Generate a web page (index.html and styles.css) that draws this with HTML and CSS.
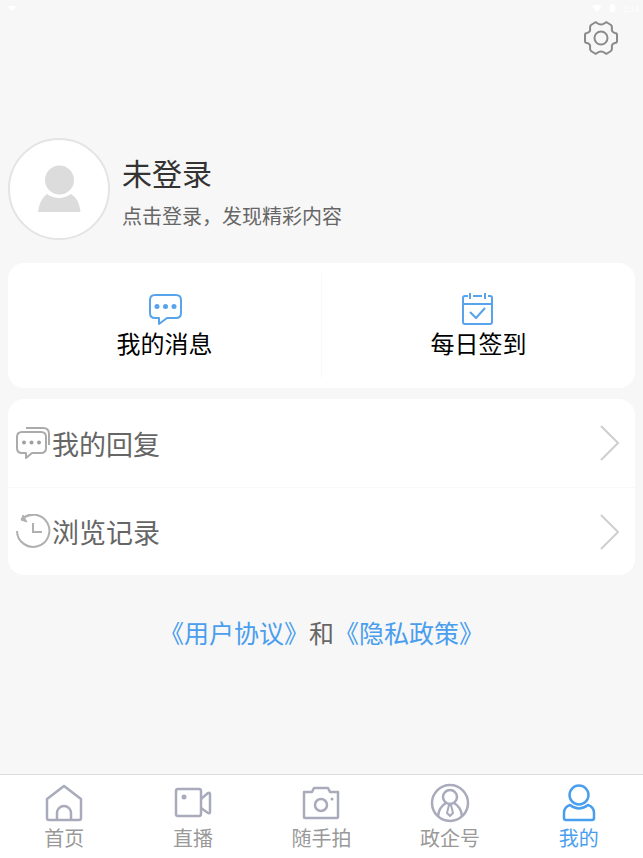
FILE: index.html
```html
<!DOCTYPE html>
<html lang="zh-CN">
<head>
  <meta charset="UTF-8" />
  <meta name="viewport" content="width=device-width, initial-scale=1.0" />
  <title>我的</title>
  <link rel="stylesheet" href="styles.css">
</head>
<body>
  <div class="status-bar">
    <svg width="8" height="6" viewBox="0 0 8 6"><path d="M0 1h8l-2 4H2z" fill="currentColor"/></svg>
    <div class="status-right">
      <svg width="10" height="8" viewBox="0 0 10 8"><path d="M0 2Q5-1 10 2L5 8z" fill="currentColor"/></svg>
      <svg width="5" height="8" viewBox="0 0 5 8"><path d="M0 1h1V0h3v1h1v7H0z" fill="currentColor"/></svg>
      <span>1:34</span>
    </div>
  </div>

  <header class="top-bar">
    <button class="settings" type="button" aria-label="设置">
      <svg width="36" height="36" viewBox="0 0 36 36" fill="none" stroke="#8a8a8a" stroke-width="2" stroke-linejoin="round">
        <path d="M12 2.500Q13 2 14 3Q18 6 22 3Q23 2 24 2.500L28 5Q29 6 29 8Q28 12 32 13Q34 13 34 15V21Q34 23 32 23Q28 24 29 28Q29 30 28 31L24 33.500Q23 34 22 33Q18 30 14 33Q13 34 12 33.500L8 31Q7 30 7 28Q8 24 4 23Q2 23 2 21V15Q2 13 4 13Q8 12 7 8Q7 6 8 5z"/>
        <circle cx="18" cy="18" r="6.500"/>
      </svg>
    </button>
  </header>

  <main>
    <a class="profile" href="#login">
      <span class="avatar">
        <svg width="44" height="48" viewBox="0 0 44 48" fill="#dcdcdc">
          <circle cx="22.500" cy="15" r="14.500"/>
          <path d="M10 29Q22 37 34 29Q42 34 43.500 46Q43.500 47 42 47H2Q1 47 1 46Q3 34 10 29z"/>
        </svg>
      </span>
      <span class="profile-text">
        <strong>未登录</strong>
        <span class="hint">点击登录，发现精彩内容</span>
      </span>
    </a>

    <section class="card shortcuts">
      <a href="#messages">
        <svg width="36" height="34" viewBox="0 0 36 34" fill="none" stroke="#57a3ec" stroke-width="2" stroke-linejoin="round">
          <path d="M8 3H29Q34 3 34 8V21Q34 26 29 26H20L12 32V26H8Q3 26 3 21V8Q3 3 8 3z"/>
          <g fill="#57a3ec" stroke="none"><circle cx="10" cy="14.500" r="2.500"/><circle cx="18.500" cy="14.500" r="2.500"/><circle cx="27" cy="14.500" r="2.500"/></g>
        </svg>
        <span>我的消息</span>
      </a>
      <a href="#signin">
        <svg width="36" height="34" viewBox="0 0 36 34" fill="none" stroke="#57a3ec" stroke-width="2" stroke-linejoin="round">
          <path d="M7 4H4Q2 4 2 6V30Q2 32 4 32H29Q31 32 31 30V6Q31 4 29 4H27M12 4H21M9 1V7M24 1V7M2 12H31M9 20L15 26L24 16"/>
        </svg>
        <span>每日签到</span>
      </a>
    </section>

    <nav class="card menu">
      <a href="#replies">
        <svg width="36" height="36" viewBox="0 0 36 36" fill="none" stroke="#ababab" stroke-width="2" stroke-linejoin="round">
          <path d="M6 7H25Q30 7 30 12V23Q30 28 25 28H16L10 33V28H6Q1 28 1 23V12Q1 7 6 7zM10 3H27Q33 3 33 9V20"/>
          <g fill="#a0a0a0" stroke="none"><circle cx="8" cy="17.500" r="2"/><circle cx="15.500" cy="17.500" r="2"/><circle cx="23" cy="17.500" r="2"/></g>
        </svg>
        <span>我的回复</span>
        <svg class="arrow" width="20" height="36" viewBox="0 0 20 36" fill="none" stroke="#cfcfcf" stroke-width="2"><path d="M2 1L19 18L2 35"/></svg>
      </a>
      <a href="#history">
        <svg width="36" height="36" viewBox="0 0 36 36" fill="none" stroke="#b0b0b0" stroke-width="2">
          <path d="M1 17A16.200 16.200 0 1 0 6 5M6 5Q11 1 17 1M17 9V18H26"/>
          <path d="M7 1L5 6L11 8z" fill="#b0b0b0" stroke-width="1" stroke-linejoin="round"/>
        </svg>
        <span>浏览记录</span>
        <svg class="arrow" width="20" height="36" viewBox="0 0 20 36" fill="none" stroke="#cfcfcf" stroke-width="2"><path d="M2 1L19 18L2 35"/></svg>
      </a>
    </nav>

    <p class="agreement"><a href="#terms">《用户协议》</a>和<a href="#privacy">《隐私政策》</a></p>
  </main>

  <nav class="tab-bar">
    <a href="#home">
      <svg width="40" height="40" viewBox="0 0 40 40" fill="none" stroke="currentColor" stroke-width="2.500" stroke-linejoin="round">
        <path d="M3 16L20 3L37 16V35Q37 37 35 37H5Q3 37 3 35zM13 37V30A7 7 0 0 1 27 30V37"/>
      </svg>
      <span>首页</span>
    </a>
    <a href="#live">
      <svg width="40" height="40" viewBox="0 0 40 40" fill="none" stroke="currentColor" stroke-width="2.500" stroke-linejoin="round">
        <rect x="3" y="6" width="25" height="27" rx="2"/>
        <path d="M28 16L35 10Q37 9 37 11V29Q37 31 35 30L28 25"/>
        <circle cx="11" cy="14" r="2.500" fill="currentColor" stroke="none"/>
      </svg>
      <span>直播</span>
    </a>
    <a href="#snap">
      <svg width="40" height="40" viewBox="0 0 40 40" fill="none" stroke="currentColor" stroke-width="2.500" stroke-linejoin="round">
        <path d="M3 9H11L13 5H27L29 9H37V34Q37 35 36 35H4Q3 35 3 34z"/>
        <circle cx="20" cy="22" r="6"/>
        <circle cx="31" cy="16" r="1.500" fill="currentColor" stroke="none"/>
      </svg>
      <span>随手拍</span>
    </a>
    <a href="#gov">
      <svg width="40" height="40" viewBox="0 0 40 40" fill="none" stroke="currentColor" stroke-width="2.500" stroke-linejoin="round">
        <circle cx="20" cy="20" r="18"/>
        <circle cx="20" cy="14" r="7"/>
        <path d="M8 33Q9 24 16 20M24 20Q31 24 32 33"/>
        <path d="M19 22H21L23 30L20 33L17 30z" stroke-width="2"/>
      </svg>
      <span>政企号</span>
    </a>
    <a class="active" href="#me" aria-current="page">
      <svg width="40" height="40" viewBox="0 0 40 40" fill="none" stroke="currentColor" stroke-width="2.500" stroke-linejoin="round">
        <circle cx="20" cy="12" r="9.500"/>
        <path d="M11 22Q20 29 29 22Q35 24 35 30V35Q35 37 33 37H7Q5 37 5 35V30Q5 24 11 22z"/>
      </svg>
      <span>我的</span>
    </a>
  </nav>
</body>
</html>
```
FILE: styles.css
```css
* {
  box-sizing: border-box;
}

body {
  font-family: "Noto Sans CJK SC", sans-serif;
  margin: 0;
  min-height: 100vh;
  background: #f7f7f7;
  color: #666;
  display: flex;
  flex-direction: column;
}

a {
  color: inherit;
  text-decoration: none;
}

svg {
  display: block;
  flex-shrink: 0;
}

.status-bar {
  display: flex;
  justify-content: space-between;
  align-items: center;
  height: 16px;
  padding: 0 4px 0 8px;
  color: #fff;
  font-size: 8px;
}

.status-right {
  display: flex;
  align-items: center;
  gap: 8px;
}

.top-bar {
  display: flex;
  justify-content: flex-end;
  padding: 4px 24px;
}

.settings {
  border: 0;
  padding: 0;
  background: none;
  cursor: pointer;
}

main {
  flex: 1;
  padding: 78px 8px 0;
}

.profile {
  display: flex;
  align-items: center;
  gap: 12px;
}

.avatar {
  display: flex;
  align-items: center;
  justify-content: center;
  width: 102px;
  height: 102px;
  border: 2px solid #e4e4e4;
  border-radius: 50%;
  background: #fff;
}

.profile-text {
  display: flex;
  flex-direction: column;
  gap: 10px;
  padding-top: 4px;
}

.profile-text strong {
  font-size: 30px;
  line-height: 40px;
  font-weight: 400;
  color: #333;
}

.hint {
  font-size: 20px;
  line-height: 28px;
}

.card {
  background: #fff;
  border-radius: 16px;
}

.shortcuts {
  display: flex;
  margin-top: 23px;
  padding: 10px 0;
}

.shortcuts a {
  flex: 1;
  display: flex;
  flex-direction: column;
  align-items: center;
  padding: 19px 0 18px;
  color: #000;
  font-size: 24px;
  line-height: 34px;
}

.shortcuts a + a {
  border-left: 1px solid #f9f9f9;
}

.menu {
  margin-top: 11px;
}

.menu a {
  display: flex;
  align-items: center;
  height: 88px;
  padding: 0 16px 0 8px;
  font-size: 27px;
}

.menu a + a {
  border-top: 1px solid #f9f9f9;
}

.arrow {
  margin-left: auto;
}

.agreement {
  margin: 38px 0;
  text-align: center;
  font-size: 25px;
  line-height: 38px;
}

.agreement a {
  color: #4a9eee;
}

.tab-bar {
  display: flex;
  padding: 8px 0 5px;
  background: #fff;
  border-top: 1px solid #ddd;
  color: #a9abbc;
}

.tab-bar a {
  flex: 1;
  display: flex;
  flex-direction: column;
  align-items: center;
}

.tab-bar span {
  font-size: 20px;
  line-height: 30px;
  color: #999;
}

.tab-bar .active,
.tab-bar .active span {
  color: #4a9eee;
}
```
